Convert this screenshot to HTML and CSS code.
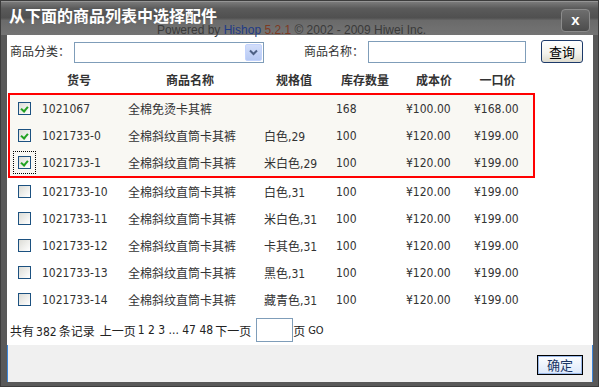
FILE: index.html
```html
<!DOCTYPE html>
<html>
<head>
<meta charset="utf-8">
<title>选择配件</title>
<link rel="stylesheet" href="styles.css">
</head>
<body>
<div class="dialog">
	<div class="titlebar">
		<h1>从下面的商品列表中选择配件</h1>
		<a class="close" href="javascript:;">x</a>
		<div class="powered">Powered by <span class="brand">Hishop</span> <span class="ver">5.2.1</span> © 2002 - 2009 Hiwei Inc.</div>
	</div>
	<div class="main">
		<div class="filter">
			<label class="lbl">商品分类：</label>
			<span class="select"><span class="arrow"><svg width="9" height="7" viewBox="0 0 9 7"><path d="M1 1.5l3.5 3.5 3.5-3.5" fill="none" stroke="#4d6185" stroke-width="2"/></svg></span></span>
			<label class="lbl lbl2">商品名称：</label>
			<input class="txt" type="text">
			<button class="btn-query">查询</button>
		</div>

		<div class="row head">
			<span></span><span>货号</span><span>商品名称</span><span>规格值</span><span>库存数量</span><span>成本价</span><span>一口价</span>
		</div>

		<div class="group sel">
			<div class="row">
				<span><i class="cb on"></i></span><span>1021067</span><span>全棉免烫卡其裤</span><span></span><span>168</span><span>¥100.00</span><span>¥168.00</span>
			</div>
			<div class="row">
				<span><i class="cb on"></i></span><span>1021733-0</span><span>全棉斜纹直筒卡其裤</span><span>白色,29</span><span>100</span><span>¥120.00</span><span>¥199.00</span>
			</div>
			<div class="row">
				<span><i class="cb on focus"></i></span><span>1021733-1</span><span>全棉斜纹直筒卡其裤</span><span>米白色,29</span><span>100</span><span>¥120.00</span><span>¥199.00</span>
			</div>
		</div>

		<div class="group">
			<div class="row">
				<span><i class="cb"></i></span><span>1021733-10</span><span>全棉斜纹直筒卡其裤</span><span>白色,31</span><span>100</span><span>¥120.00</span><span>¥199.00</span>
			</div>
			<div class="row">
				<span><i class="cb"></i></span><span>1021733-11</span><span>全棉斜纹直筒卡其裤</span><span>米白色,31</span><span>100</span><span>¥120.00</span><span>¥199.00</span>
			</div>
			<div class="row">
				<span><i class="cb"></i></span><span>1021733-12</span><span>全棉斜纹直筒卡其裤</span><span>卡其色,31</span><span>100</span><span>¥120.00</span><span>¥199.00</span>
			</div>
			<div class="row">
				<span><i class="cb"></i></span><span>1021733-13</span><span>全棉斜纹直筒卡其裤</span><span>黑色,31</span><span>100</span><span>¥120.00</span><span>¥199.00</span>
			</div>
			<div class="row">
				<span><i class="cb"></i></span><span>1021733-14</span><span>全棉斜纹直筒卡其裤</span><span>藏青色,31</span><span>100</span><span>¥120.00</span><span>¥199.00</span>
			</div>
		</div>

		<div class="pager">
			<span>共有<span class="n">382</span>条记录</span>
			<span class="gap">上一页</span>
			<span class="n">1 2 3 ... 47 48</span>
			<span>下一页</span>
			<input class="page-no" type="text">
			<span>页</span>
			<span class="n go">GO</span>
		</div>
	</div>
	<div class="foot">
		<button class="btn-ok">确定</button>
	</div>
</div>
</body>
</html>
```
FILE: styles.css
```css
* { margin: 0; padding: 0; box-sizing: border-box; }
body{
	font-family: "DejaVu Sans Condensed", "Liberation Sans", "Noto Sans CJK SC", sans-serif;
	font-size: 12px;
	color: #333;
	background: #fff;
}
.dialog{
	width: 599px;
	height: 387px;
	border: 1px solid #3c3c3c;
	background: #595959;
}

/* title */
.titlebar{
	position: relative;
	height: 34px;
	display: flex;
	justify-content: space-between;
	align-items: flex-start;
	padding: 0 8px;
	background: linear-gradient(#7a7a7a, #5a5a5a 20%, #505050 48%, #6a6a6a 56%, #747474);
	border-top: 1px solid #959595;
}
.titlebar h1{
	margin-top: 5px;
	font-size: 16px;
	line-height: 16px;
	font-weight: bold;
	color: #fff;
	font-family: "Noto Sans CJK SC", sans-serif;
}
.close{
	margin-top: 7px;
	width: 29px;
	height: 23px;
	display: flex;
	align-items: center;
	justify-content: center;
	border: 1px solid #8c8c8c;
	border-radius: 4px;
	background: linear-gradient(#6e6e6e, #4c4c4c);
	color: #fff;
	font-family: "Liberation Sans", sans-serif;
	font-weight: bold;
	font-size: 15px;
	text-decoration: none;
	padding-bottom: 2px;
}
.powered{
	position: absolute;
	left: 156px;
	top: 22px;
	font-family: "Liberation Sans", sans-serif;
	font-size: 12px;
	line-height: 12px;
	color: #3a3a3a;
}
.powered .brand{ color: #1e3a86; }
.powered .ver{ color: #7e3a22; }

/* body */
.main{
	margin: 0 5px 0 6px;
	height: 310px;
	background: #fff;
	padding: 4px 0 0 1px;
}
.filter{
	height: 27px;
	display: flex;
	align-items: flex-start;
	padding-left: 2px;
}
.lbl{
	width: 60px;
	line-height: 22px;
	margin-top: 1px;
	font-family: "Noto Sans CJK SC", sans-serif;
}
.lbl2{ margin-left: 40px; }
.select{
	margin: 3px 0 0 4px;
	width: 190px;
	height: 21px;
	border: 1px solid #7f9db9;
	display: flex;
	justify-content: flex-end;
	padding: 1px;
}
.arrow{
	width: 17px;
	display: flex;
	align-items: center;
	justify-content: center;
	background: linear-gradient(#d3defa, #b6c9f3);
	border: 1px solid #c3d3fd;
	border-radius: 2px;
}
.txt{
	margin: 2px 0 0 4px;
	width: 158px;
	height: 22px;
	border: 1px solid #7f9db9;
}
.btn-query{
	margin: 1px 0 0 15px;
	width: 42px;
	height: 23px;
	border: 1px solid #1d3a6a;
	border-radius: 3px;
	background: linear-gradient(#fff, #f3f2ec 60%, #dedbce);
	font-family: "Noto Sans CJK SC", sans-serif;
	font-size: 13px;
	color: #000;
}

/* list */
.row{
	display: grid;
	grid-template-columns: 32px 86px 136px 72px 70px 68px 59px;
	height: 27px;
	align-items: center;
	white-space: nowrap;
}
.head{
	padding: 0 2px;
	font-weight: bold;
	font-family: "Noto Sans CJK SC", sans-serif;
	font-size: 12px;
}
.head span{
	text-align: center;
	padding-right: 12px;
}
.group{
	width: 527px;
	border-left: 2px solid transparent;
	border-right: 2px solid transparent;
}
.group.sel{
	border: 2px solid #f00;
	background: #f9f8f3;
}
.cb{
	display: block;
	margin-left: 8px;
	width: 13px;
	height: 13px;
	border: 1px solid #1c5180;
	background: linear-gradient(135deg, #dcdcd6, #fff);
	position: relative;
}
.cb.on::after{
	content: "";
	position: absolute;
	left: 3px;
	top: 2px;
	width: 3px;
	height: 5px;
	border: solid #21a121;
	border-width: 0 2px 2px 0;
	transform: rotate(40deg);
}
.cb.focus{
	outline: 1px dotted #000;
	outline-offset: 4px;
}

/* pager */
.pager{
	margin-top: 4px;
	display: flex;
	align-items: center;
	height: 26px;
	padding-left: 2px;
	font-family: "Noto Sans CJK SC", sans-serif;
	color: #222;
}
.pager .n{ font-family: "DejaVu Sans Condensed", "Liberation Sans", sans-serif; margin: 0 2px; }
.pager .gap{ margin-left: 5px; }
.pager .go{ margin-left: 3px; font-size: 11px; }
.page-no{
	margin: 0 0 0 5px;
	width: 37px;
	height: 24px;
	border: 1px solid #7f9db9;
}

/* footer */
.foot{
	margin: 0 5px 0 6px;
	height: 37px;
	background: #f0f0f0;
	border-left: 1px solid #3d86d8;
	border-right: 1px solid #3d86d8;
	display: flex;
	justify-content: flex-end;
	align-items: flex-start;
	padding: 10px 9px 0 0;
}
.btn-ok{
	width: 46px;
	height: 20px;
	border: 1px solid #000;
	background: linear-gradient(#fdfeff, #dce8fa);
	box-shadow: inset 0 0 0 1px #9ab8e8;
	font-family: "Noto Sans CJK SC", sans-serif;
	font-size: 13px;
	line-height: 16px;
	color: #1a3566;
}
```
